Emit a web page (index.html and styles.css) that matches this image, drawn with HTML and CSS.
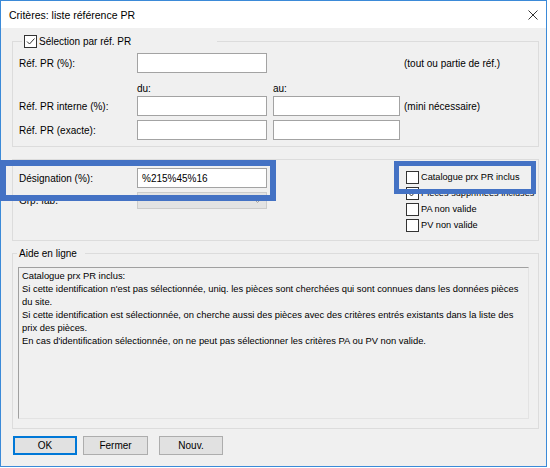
FILE: index.html
```html
<!DOCTYPE html>
<html lang="fr">
<head>
<meta charset="utf-8">
<title>Critères: liste référence PR</title>
<link rel="stylesheet" href="styles.css">
</head>
<body>
<div class="window">
  <div class="titlebar">
    <span class="title">Critères: liste référence PR</span>
    <svg class="close" viewBox="0 0 10 10" width="10" height="10"><path d="M0.5 0.5 L9.5 9.5 M9.5 0.5 L0.5 9.5" stroke="#333" stroke-width="1" fill="none"/></svg>
  </div>
  <div class="content">
    <div class="group g1">
      <div class="legend legend1">
        <span class="cb"><svg viewBox="0 0 11 11" width="11" height="11"><path d="M2 5.5 L4.5 8 L9.5 2.5" stroke="#333" stroke-width="1" fill="none"/></svg></span>
        <span>Sélection par réf. PR</span>
      </div>
      <div class="row r1">
        <span class="lbl">Réf. PR (%):</span>
        <span class="input"></span>
        <span class="note note-far">(tout ou partie de réf.)</span>
      </div>
      <div class="row duau">
        <span class="du">du:</span>
        <span>au:</span>
      </div>
      <div class="row r2">
        <span class="lbl">Réf. PR interne (%):</span>
        <span class="input"></span>
        <span class="input w2"></span>
        <span class="note">(mini nécessaire)</span>
      </div>
      <div class="row r3">
        <span class="lbl">Réf. PR (exacte):</span>
        <span class="input"></span>
        <span class="input w2"></span>
      </div>
    </div>

    <div class="group g2">
      <div class="g2-left">
        <div class="row">
          <span class="lbl">Désignation (%):</span>
          <span class="input"><span class="val">%215%45%16</span></span>
        </div>
        <div class="row r-grp">
          <span class="lbl">Grp. fab.</span>
          <span class="combo"><svg viewBox="0 0 7 4" width="7" height="4"><path d="M0.5 0.5 L3.5 3.5 L6.5 0.5" stroke="#a0a0a0" stroke-width="1" fill="none"/></svg></span>
        </div>
      </div>
      <div class="g2-right">
        <div class="chk"><span class="cb"></span><span>Catalogue prx PR inclus</span></div>
        <div class="chk"><span class="cb"><svg viewBox="0 0 11 11" width="11" height="11"><path d="M2 5.5 L4.5 8 L9.5 2.5" stroke="#333" stroke-width="1" fill="none"/></svg></span><span>Pièces supprimées incluses</span></div>
        <div class="chk"><span class="cb"></span><span>PA non valide</span></div>
        <div class="chk"><span class="cb"></span><span>PV non valide</span></div>
      </div>
    </div>

    <div class="group g3">
      <div class="legend legend3"><span>Aide en ligne</span></div>
      <div class="help">
        <div class="line">Catalogue prx PR inclus:</div>
        <div class="line">Si cette identification n'est pas sélectionnée, uniq. les pièces sont cherchées qui sont connues dans les données pièces</div>
        <div class="line">du site.</div>
        <div class="line">Si cette identification est sélectionnée, on cherche aussi des pièces avec des critères entrés existants dans la liste des</div>
        <div class="line">prix des pièces.</div>
        <div class="line">En cas d'identification sélectionnée, on ne peut pas sélectionner les critères PA ou PV non valide.</div>
      </div>
    </div>

    <div class="buttons">
      <span class="btn btn-ok">OK</span>
      <span class="btn btn-close">Fermer</span>
      <span class="btn btn-new">Nouv.</span>
    </div>
  </div>

  <div class="hl hl1"></div>
  <div class="hl hl2"></div>
</div>
</body>
</html>
```

FILE: styles.css
```css
* { box-sizing: border-box; }

body {
  margin: 0;
  background: #ffffff;
  font-family: "Liberation Sans", Arial, sans-serif;
  font-size: 10px;
  color: #000;
}

.window {
  position: relative;
  width: 547px;
  height: 467px;
  border: 1px solid #3b8ad8;
  background: #f0f0f0;
  display: flex;
  flex-direction: column;
}

.titlebar {
  flex: none;
  height: 27px;
  background: #fff;
  display: flex;
  align-items: center;
  justify-content: space-between;
  padding: 0 8px 0 8px;
}

.title { font-size: 10.5px; }

.close { display: block; }

.content {
  padding: 13px 0 0 11px;
}

.group {
  width: 527px;
  border: 1px solid #dcdcdc;
}

.legend {
  display: flex;
  align-items: center;
  height: 14px;
  margin-top: -8px;
  background: #f0f0f0;
}

.legend1 {
  width: 195px;
  margin-left: 3px;
  padding: 0 2px;
  gap: 2px;
}

.cb {
  flex: none;
  width: 13px;
  height: 13px;
  border: 1px solid #333;
  background: #fff;
  display: flex;
  align-items: center;
  justify-content: center;
}

.cb svg { display: block; }

.g1 {
  height: 106px;
  padding-left: 6px;
}

.row {
  display: flex;
  align-items: center;
  height: 20px;
}

.lbl {
  flex: none;
  width: 118px;
}

.input {
  flex: none;
  width: 130px;
  height: 20px;
  border: 1px solid #a3a3a3;
  background: #fff;
  display: flex;
  align-items: center;
}

.input.w2 {
  width: 127px;
  margin-left: 6px;
}

.note { margin-left: 4px; }
.note-far { margin-left: 137px; }

.r1 { margin-top: 5px; }

.duau {
  margin-top: 8px;
  height: 14px;
}

.du {
  margin-left: 118px;
  width: 136px;
}

.r2 { margin-top: 1px; }
.r3 { margin-top: 4px; }

.g2 {
  margin-top: 12px;
  height: 82px;
  padding-left: 6px;
  display: flex;
}

.g2-left {
  padding-top: 8px;
}

.val { padding-left: 4px; }

.r-grp {
  margin-top: 4px;
  height: 17px;
}

.combo {
  flex: none;
  width: 130px;
  height: 17px;
  border: 1px solid #cccccc;
  background: #e3e3e3;
  display: flex;
  align-items: center;
  justify-content: flex-end;
  padding-right: 5px;
}

.combo svg { display: block; }

.g2-right {
  margin-left: 139px;
  padding-top: 9px;
  width: 130px;
  font-size: 9.2px;
}

.chk {
  display: flex;
  align-items: center;
  height: 16px;
  gap: 2px;
  white-space: nowrap;
}

.g3 {
  margin-top: 12px;
  height: 176px;
  padding: 0 9px 0 5px;
}

.legend3 {
  width: max-content;
  margin-left: -1px;
  padding: 0 8px 0 2px;
}

.help {
  margin-top: 7px;
  height: 152px;
  border: 1px solid #a0a0a0;
  border-right-color: #e3e3e3;
  border-bottom-color: #e3e3e3;
  padding: 1px 0 0 3px;
  line-height: 13px;
  font-size: 9.4px;
}

.line { white-space: nowrap; }

.buttons {
  display: flex;
  margin-top: 7px;
  margin-left: 1px;
}

.btn {
  height: 19px;
  border: 1px solid #adadad;
  background: #e1e1e1;
  display: flex;
  align-items: center;
  justify-content: center;
}

.btn-ok {
  width: 64px;
  border-color: #0078d7;
  box-shadow: inset 0 0 0 1px #0078d7;
}

.btn-close {
  width: 65px;
  margin-left: 6px;
}

.btn-new {
  width: 64px;
  margin-left: 11px;
}

.hl {
  position: absolute;
  border: 6px solid #4472c4;
}

.hl1 {
  left: -1px;
  top: 159px;
  width: 276px;
  height: 41px;
}

.hl2 {
  left: 393px;
  top: 160px;
  width: 142px;
  height: 33px;
  border-width: 5px;
}
```
